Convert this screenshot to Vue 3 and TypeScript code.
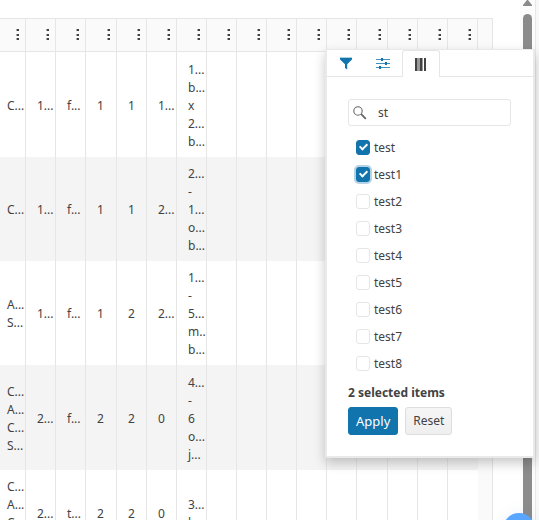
<script setup lang="ts">
import { computed, ref } from 'vue'

interface Row {
  cells: string[][]
}

const columnWidths: number[] = [26, 30, 30, 31, 30, 30, 30, 30, 30, 30, 30, 30, 31, 30, 30, 30]
const blankColumns = 9

const rows: Row[] = [
  { cells: [['C...'], ['1...'], ['f...'], ['1'], ['1'], ['1...'], ['1...', 'b...', 'x', '2...', 'b...']] },
  { cells: [['C...'], ['1...'], ['f...'], ['1'], ['1'], ['2...'], ['2...', '-', '1...', 'o...', 'b...']] },
  { cells: [['A...', 'S...'], ['1...'], ['f...'], ['1'], ['2'], ['2...'], ['1...', '-', '5...', 'm...', 'b...']] },
  { cells: [['C...', 'A...', 'C...', 'S...'], ['2...'], ['f...'], ['2'], ['2'], ['0'], ['4...', '-', '6', 'o...', 'j...']] },
  { cells: [['C...', 'A...', 'C...', 'S...'], ['2...'], ['t...'], ['2'], ['2'], ['0'], ['3...', 'b...']] },
]

const query = ref('st')
const options: string[] = ['test', 'test1', 'test2', 'test3', 'test4', 'test5', 'test6', 'test7', 'test8']
const selected = ref<string[]>(['test', 'test1'])
const focused = ref('test1')
const visible = computed(() => options.filter((o) => o.includes(query.value)))

function reset(): void {
  selected.value = []
}
</script>

<template>
  <div class="page">
    <main class="grid-area">
      <table class="grid">
        <colgroup>
          <col v-for="(w, i) in columnWidths" :key="i" :style="{ width: w + 'px' }" />
          <col class="filler-col" />
        </colgroup>
        <thead>
          <tr>
            <th v-for="(w, i) in columnWidths" :key="i">
              <button type="button" class="column-menu" aria-label="Column menu">
                <svg width="3" height="12" viewBox="0 0 3 12">
                  <g fill="#424242">
                    <rect x="1" y="0" width="2" height="2" />
                    <rect x="1" y="5" width="2" height="2" />
                    <rect x="1" y="9" width="2" height="2" />
                  </g>
                  <g fill="#a8a8a8">
                    <rect x="0" y="0" width="1" height="2" />
                    <rect x="0" y="5" width="1" height="2" />
                    <rect x="0" y="9" width="1" height="2" />
                  </g>
                </svg>
              </button>
            </th>
            <th></th>
          </tr>
        </thead>
        <tbody>
          <tr v-for="(row, r) in rows" :key="r">
            <td v-for="(lines, c) in row.cells" :key="c">
              <div v-for="(line, l) in lines" :key="l">{{ line }}</div>
            </td>
            <td v-for="n in blankColumns" :key="'blank' + n"></td>
            <td class="filler"></td>
          </tr>
        </tbody>
      </table>
    </main>

    <div class="scrollbar" aria-hidden="true">
      <svg class="arrow" width="9" height="6" viewBox="0 0 9 6"><path d="M4 0H5L9 5V6H0V5Z" fill="#8b8b8b" /></svg>
      <div class="thumb"></div>
    </div>
    <div class="edge"></div>

    <button type="button" class="bubble" aria-label="Help"></button>

    <section class="panel">
      <div class="tabs" role="tablist">
        <button type="button" class="tab" role="tab" aria-label="Filter">
          <svg width="12" height="13" viewBox="0 0 12 13">
            <path d="M0 1H12V2.4L7.2 7.2V12.6L5 11V7.2L0 2.4Z" fill="#1274ac" />
            <path d="M0 0H12V1H0Z" fill="#1274ac" fill-opacity=".35" />
          </svg>
        </button>
        <button type="button" class="tab" role="tab" aria-label="Settings">
          <svg width="14" height="12" viewBox="0 0 14 12">
            <path d="M0 2.5H14M0 6.5H14M0 10.5H14" stroke="#1274ac" stroke-opacity=".8" />
            <path d="M5 1H7V4H5ZM9 5H11V8H9ZM3 9H5V12H3Z" fill="#1274ac" />
          </svg>
        </button>
        <button type="button" class="tab active" role="tab" aria-selected="true" aria-label="Columns">
          <svg width="12" height="13" viewBox="0 0 12 13">
            <path d="M0 0H2V13H0ZM5 0H7V13H5ZM9 0H11V13H9Z" fill="#424242" />
            <path d="M2 0H5V13H2ZM7 0H8V13H7Z" fill="#999" />
          </svg>
        </button>
      </div>
      <form class="content" @submit.prevent>
        <div class="search">
          <svg width="14" height="14" viewBox="0 0 14 14" fill="none" stroke="#656565">
            <circle cx="5" cy="5" r="4.2" stroke-width="1.1" />
            <path d="M8.2 8.2L12.8 12.8" stroke-width="1.8" />
          </svg>
          <input v-model="query" type="text" aria-label="Search columns" />
        </div>
        <ul class="options">
          <li v-for="option in visible" :key="option">
            <label>
              <input
                v-model="selected"
                type="checkbox"
                :value="option"
                :class="{ focused: option === focused }"
                @focus="focused = option"
              />
              <span>{{ option }}</span>
            </label>
          </li>
        </ul>
        <p class="summary">{{ selected.length }} selected items</p>
        <div class="actions">
          <button type="submit" class="button primary">Apply</button>
          <button type="button" class="button" @click="reset">Reset</button>
        </div>
      </form>
    </section>
  </div>
</template>

<style>
body {
  margin: 0;
  background: #fff;
}
</style>

<style scoped>
.page {
  position: relative;
  display: flex;
  height: 100vh;
  overflow: hidden;
  color: #424242;
  font: 12px/18px "Noto Sans", "Open Sans", sans-serif;
}

button,
input {
  font: inherit;
  color: inherit;
  margin: 0;
}

svg {
  display: block;
}

.grid-area {
  flex: 1;
  min-width: 0;
  padding-top: 18px;
  overflow: hidden;
}

.grid {
  width: 493px;
  table-layout: fixed;
  border-collapse: separate;
  border-spacing: 0;
}

.filler-col {
  width: 15px;
}

th {
  height: 32px;
  padding: 0;
  background: #fafafa;
  border: solid #e6e6e6;
  border-width: 1px 1px 1px 0;
}

.column-menu {
  display: block;
  margin-left: auto;
  padding: 2px 6px 3px 0;
  border: 0;
  background: none;
}

td {
  padding: 8px 0 6px 11px;
  border-right: 1px solid #e6e6e6;
  white-space: nowrap;
  overflow: hidden;
}

td:first-child {
  padding-left: 7px;
}

tbody tr:first-child td,
tbody tr:nth-child(4) td {
  padding-top: 9px;
}

tbody tr:nth-child(even) {
  background: #f4f4f4;
}

td:nth-last-child(2) {
  border-right: 0;
}

.filler {
  padding: 0;
  background: #fafafa;
}

.scrollbar {
  display: flex;
  flex-direction: column;
  align-items: center;
  width: 15px;
  background: #fcfcfc;
}

.arrow {
  margin-bottom: 8px;
}

.thumb {
  flex: 1;
  width: 9px;
  border-radius: 5px 5px 0 0;
  background: #8b8b8b;
}

.edge {
  width: 3px;
  border-left: 1px solid #e8e8e8;
  background: #f8f8f8;
}

.bubble {
  position: absolute;
  right: 4px;
  bottom: -25px;
  width: 32px;
  height: 32px;
  padding: 0;
  border: 0;
  border-radius: 50%;
  background: #58a6ff;
  box-shadow: 0 2px 16px rgba(60, 110, 200, 0.12);
}

.panel {
  position: absolute;
  top: 49px;
  right: 4px;
  width: 210px;
  box-sizing: border-box;
  border: solid #e9e9e9;
  border-width: 1px 2px 2px;
  border-radius: 2px;
  background: #fff;
  box-shadow: 0 5px 12px rgba(0, 0, 0, 0.22);
}

.tabs {
  display: flex;
  height: 26px;
  border-bottom: 1px solid #e6e6e6;
}

.tab {
  display: flex;
  align-items: center;
  justify-content: center;
  box-sizing: border-box;
  width: 37px;
  height: 26px;
  padding: 0;
  border: 0;
  background: none;
}

.tab + .tab {
  width: 38px;
}

.tab.active {
  height: 27px;
  border: 1px solid #e6e6e6;
  border-bottom: 0;
  border-radius: 3px 3px 0 0;
  background: #fff;
}

.content {
  padding: 22px 21px 21px;
}

.search {
  display: flex;
  align-items: center;
  box-sizing: border-box;
  height: 27px;
  margin-right: 1px;
  padding-left: 4px;
  gap: 11px;
  border: 1px solid #e6e6e6;
  border-radius: 3px;
}

.search input {
  flex: 1;
  min-width: 0;
  padding: 0;
  border: 0;
  outline: 0;
  background: none;
}

.options {
  margin: 8px 0 0;
  padding: 0;
  list-style: none;
}

.options label {
  display: flex;
  align-items: center;
  gap: 4px;
  height: 27px;
  padding-left: 8px;
}

.options input {
  appearance: none;
  position: relative;
  box-sizing: border-box;
  width: 14px;
  height: 15px;
  border: 1px solid #e6e6e6;
  border-radius: 3px;
  background: #fff;
}

.options input:checked {
  border-color: #1274ac;
  background: #1274ac;
}

.options input:checked::after {
  content: "";
  position: absolute;
  left: 4px;
  top: 1px;
  width: 3px;
  height: 6px;
  border: solid #fff;
  border-width: 0 2px 2px 0;
  transform: rotate(45deg);
}

.options input.focused {
  box-shadow: 0 0 0 2px #b5d3e5;
}

.summary {
  margin: 7px 0 5px;
  font-weight: 700;
}

.actions {
  display: flex;
  gap: 7px;
}

.button {
  box-sizing: border-box;
  height: 28px;
  padding: 0 7px;
  border: 1px solid #dedede;
  border-radius: 3px;
  background: linear-gradient(#f5f5f5, #efefef);
}

.button.primary {
  border-color: #1274ac;
  background: #1274ac;
  color: #fff;
  font-size: 13px;
}
</style>
